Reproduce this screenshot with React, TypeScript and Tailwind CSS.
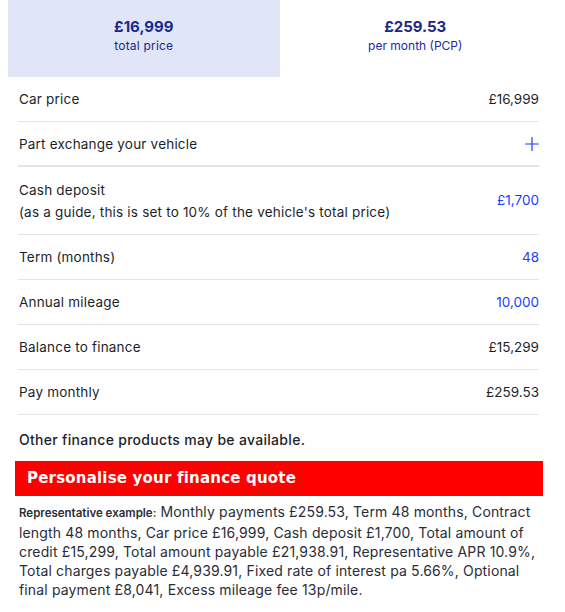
import { Plus } from 'lucide-react';

const rows = [
  { label: 'Car price', value: '£16,999', blue: false },
  { label: 'Part exchange your vehicle', plus: true },
  { label: 'Cash deposit', sub: "(as a guide, this is set to 10% of the vehicle's total price)", value: '£1,700', blue: true },
  { label: 'Term (months)', value: '48', blue: true },
  { label: 'Annual mileage', value: '10,000', blue: true },
  { label: 'Balance to finance', value: '£15,299', blue: false },
  { label: 'Pay monthly', value: '£259.53', blue: false },
];

export default function App() {
  return (
    <div className="w-[565px] h-[612px] bg-white text-[#1c1f2a] font-['Inter',sans-serif] overflow-hidden">
      {/* price tabs */}
      <div className="ml-[8px] w-[543px] grid grid-cols-2 h-[77px]">
        <div className="bg-[#e0e5f7] flex flex-col items-center justify-center pb-[5px]">
          <div className="text-[15px] font-bold text-[#1b2a8a] leading-[20px]">£16,999</div>
          <div className="text-[12px] text-[#1b2a8a] leading-[18px] tracking-[0.2px]">total price</div>
        </div>
        <div className="flex flex-col items-center justify-center pb-[5px]">
          <div className="text-[15px] font-bold text-[#1b2a8a] leading-[20px]">£259.53</div>
          <div className="text-[12px] text-[#1b2aa8] leading-[18px]">per month (PCP)</div>
        </div>
      </div>

      {/* rows */}
      <div className="ml-[18px] w-[521px]">
        {rows.map((r, i) => (
          <div
            key={i}
            className={`flex items-center justify-between pl-px text-[13.5px] ${
              r.sub ? 'h-[68px]' : 'h-[45px]'
            } ${r.plus ? 'border-b-2 border-[#e4e4e6]' : 'border-b border-[#e4e4e6]'}`}
          >
            <div className="leading-[22px] tracking-[0.2px]">
              <div>{r.label}</div>
              {r.sub && <div>{r.sub}</div>}
            </div>
            {r.plus ? (
              <Plus className="w-[22px] h-[22px] text-[#1a3cff] -mr-[4px]" strokeWidth={1.3} />
            ) : (
              <div className={r.blue ? 'text-[#1a3cff]' : ''}>{r.value}</div>
            )}
          </div>
        ))}
      </div>

      <p className="ml-[19px] mt-[15px] text-[14px] tracking-[0.3px] font-medium leading-[20px]">
        Other finance products may be available.
      </p>

      <div className="ml-[15px] mt-[11px] w-[528px] h-[35px] bg-[#ff0000] flex items-center pl-[12px]">
        <span className="text-white font-bold text-[15px] tracking-[0.2px] font-['DejaVu_Sans',sans-serif]">
          Personalise your finance quote
        </span>
      </div>

      <p className="ml-[19px] mt-[6px] w-[525px] text-[14px] tracking-[0.15px] leading-[19px] text-[#2a2d38]">
        <span className="text-[11.5px] tracking-[0px] font-semibold">Representative example:</span> Monthly payments
        £259.53, Term 48 months, Contract length 48 months, Car price £16,999, Cash deposit £1,700, Total amount of
        credit £15,299, Total amount payable £21,938.91, Representative APR 10.9%, Total charges payable
        £4,939.91, Fixed rate of interest pa 5.66%, Optional final payment £8,041, Excess mileage fee 13p/mile.
      </p>
    </div>
  );
}
